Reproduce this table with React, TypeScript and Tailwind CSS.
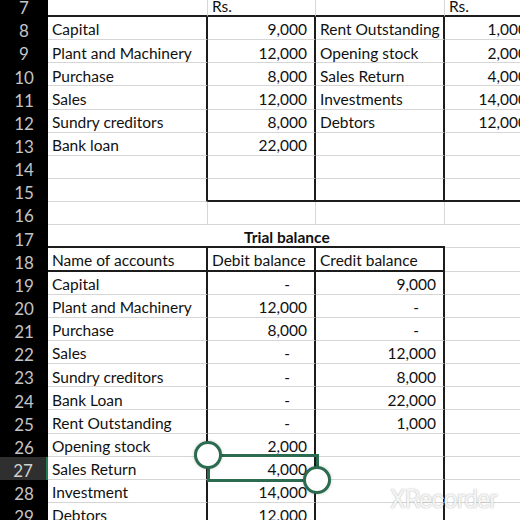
type Cell = {
  t?: string;
  align?: "l" | "r" | "dash" | "c";
  bold?: boolean;
  rb?: "g" | "k" | "n";
  bb?: "g" | "k" | "n";
};

type Row = { n: number; cells: Cell[]; merged?: boolean };

const W = ["w-[160px]", "w-[108px]", "w-[129px]", "w-[90px]"];

const g = (t = "", align: Cell["align"] = "l"): Cell => ({ t, align });

function topRow(n: number, a: string, b: string, c: string, d: string, last = false): Row {
  return {
    n,
    cells: [
      { t: a, align: "l", rb: "k", bb: "g" },
      { t: b, align: "r", rb: "k", bb: last ? "k" : "g" },
      { t: c, align: "l", rb: "k", bb: last ? "k" : "g" },
      { t: d, align: "r", rb: "g", bb: last ? "k" : "g" },
    ],
  };
}

function tbRow(n: number, a: string, b: string, c: string): Row {
  return {
    n,
    cells: [
      { t: a, align: "l", rb: "k", bb: "g" },
      { t: b, align: b === "-" ? "dash" : "r", rb: "k", bb: "g" },
      { t: c, align: c === "-" ? "dash" : "r", rb: "k", bb: "g" },
      { t: "", rb: "g", bb: "g" },
    ],
  };
}

const rows: Row[] = [
  {
    n: 7,
    cells: [
      { t: "", rb: "g", bb: "k" },
      { t: "Rs.", align: "l", rb: "g", bb: "k" },
      { t: "", rb: "g", bb: "k" },
      { t: "Rs.", align: "l", rb: "g", bb: "k" },
    ],
  },
  topRow(8, "Capital", "9,000", "Rent Outstanding", "1,000"),
  topRow(9, "Plant and Machinery", "12,000", "Opening stock", "2,000"),
  topRow(10, "Purchase", "8,000", "Sales Return", "4,000"),
  topRow(11, "Sales", "12,000", "Investments", "14,000"),
  topRow(12, "Sundry creditors", "8,000", "Debtors", "12,000"),
  topRow(13, "Bank loan", "22,000", "", ""),
  topRow(14, "", "", "", ""),
  topRow(15, "", "", "", "", true),
  { n: 16, cells: [g(), g(), g(), g()].map((c) => ({ ...c, rb: "g", bb: "g" })) },
  { n: 17, merged: true, cells: [] },
  {
    n: 18,
    cells: [
      { t: "Name of accounts", align: "l", rb: "k", bb: "k" },
      { t: "Debit balance", align: "l", rb: "k", bb: "k" },
      { t: "Credit balance", align: "l", rb: "k", bb: "k" },
      { t: "", rb: "g", bb: "g" },
    ],
  },
  tbRow(19, "Capital", "-", "9,000"),
  tbRow(20, "Plant and Machinery", "12,000", "-"),
  tbRow(21, "Purchase", "8,000", "-"),
  tbRow(22, "Sales", "-", "12,000"),
  tbRow(23, "Sundry creditors", "-", "8,000"),
  tbRow(24, "Bank Loan", "-", "22,000"),
  tbRow(25, "Rent Outstanding", "-", "1,000"),
  tbRow(26, "Opening stock", "2,000", ""),
  tbRow(27, "Sales Return", "4,000", ""),
  tbRow(28, "Investment", "14,000", ""),
  tbRow(29, "Debtors", "12,000", ""),
];

function rCls(v?: string) {
  if (v === "k") return "border-r-2 border-r-[#1c1c1c]";
  if (v === "n") return "";
  return "border-r border-r-[#d6d6d6]";
}
function bCls(v?: string) {
  if (v === "k") return "border-b-2 border-b-[#1c1c1c]";
  if (v === "n") return "";
  return "border-b border-b-[#d6d6d6]";
}

function SheetCell({ c, i }: { c: Cell; i: number }) {
  const al =
    c.align === "r"
      ? "justify-end pr-[7px]"
      : c.align === "dash"
      ? "justify-end pr-[24px]"
      : "justify-start pl-[4px]";
  return (
    <div
      className={`${W[i]} shrink-0 h-full box-border flex items-center pt-[4px] overflow-hidden whitespace-nowrap ${al} ${rCls(
        c.rb
      )} ${bCls(c.bb)} ${c.bold ? "font-bold" : ""}`}
    >
      {c.t}
    </div>
  );
}

export default function App() {
  return (
    <div className="relative w-[520px] h-[520px] overflow-hidden bg-white text-[15.5px] text-[#111] font-['Lato',sans-serif]">
      <div className="-mt-[6.15px] flex flex-col">
        {rows.map((r) => (
          <div key={r.n} className="flex h-[23.15px] shrink-0">
            <div
              className={`w-[48px] shrink-0 flex items-center justify-center pt-[5px] text-[17px] ${
                r.n === 27
                  ? "bg-[#2f2f2f] text-[#d0d0d0] border-r-2 border-r-[#1f7a4d]"
                  : "bg-black text-[#c4c4c4]"
              }`}
            >
              {r.n}
            </div>
            {r.merged ? (
              <div className="flex">
                <div className="w-[397px] h-full box-border border-b-2 border-b-[#1c1c1c] flex items-center pt-[4px] justify-start pl-[196px] font-bold">
                  Trial balance
                </div>
                <div className="w-[90px] h-full box-border border-b border-b-[#d6d6d6]" />
              </div>
            ) : (
              r.cells.map((c, i) => <SheetCell key={i} c={c} i={i} />)
            )}
          </div>
        ))}
      </div>

      {/* selection of B27 */}
      <div className="absolute left-[207px] top-[454px] w-[112px] h-[28px] border-[3px] border-[#2b6b4f]" />
      <div className="absolute left-[194px] top-[441px] w-[28px] h-[28px] rounded-full bg-white border-[3px] border-[#2b6b4f] shadow-[0_0_3px_rgba(0,0,0,0.25)]" />
      <div className="absolute left-[303px] top-[466px] w-[28px] h-[28px] rounded-full bg-white border-[3px] border-[#2b6b4f] shadow-[0_0_3px_rgba(0,0,0,0.25)]" />

      {/* recorder watermark */}
      <div className="absolute left-[390px] top-[481px] text-[25px] tracking-[-1px] text-[#f4f4f4] font-['Roboto',sans-serif] [text-shadow:0_0_1.5px_rgba(0,0,0,0.35)]">
        XRecorder
      </div>
    </div>
  );
}
